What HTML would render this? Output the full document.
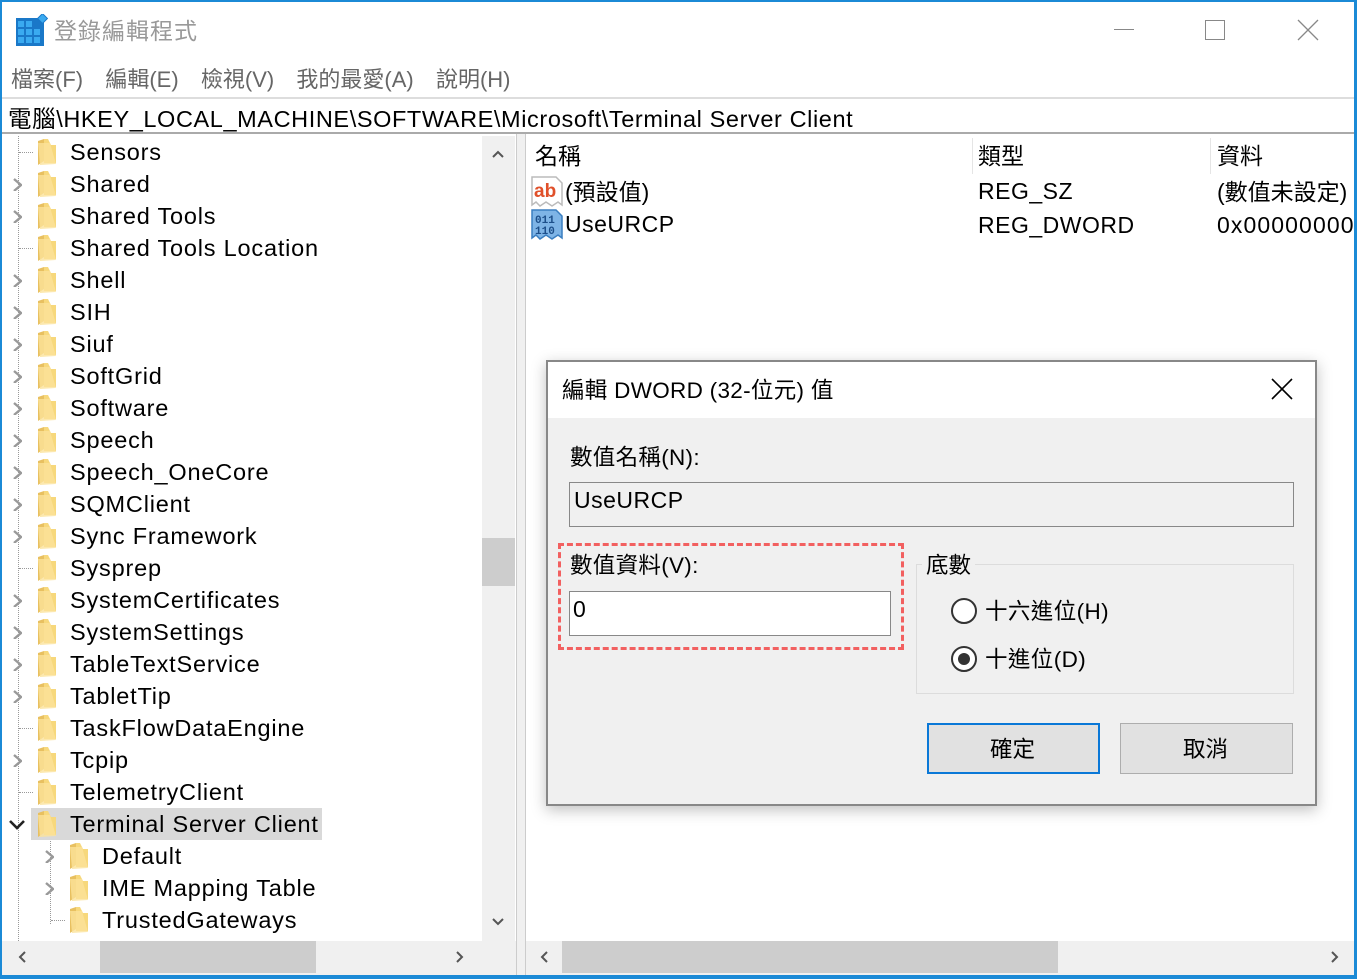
<!DOCTYPE html>
<html><head><meta charset="utf-8"><style>
*{margin:0;padding:0;box-sizing:border-box}
body{width:1357px;height:979px;position:relative;overflow:hidden;background:#fff;font-family:"Liberation Sans","Noto Sans CJK TC",sans-serif;color:#000}
.abs{position:absolute}
.win{left:0;top:0;width:1357px;height:979px;border:2px solid #1b8ad6;border-right-width:3px;border-bottom-width:4px}
.tl{font-size:23px;white-space:nowrap}
.row{position:absolute;left:0;height:32px;font-size:23.5px;line-height:32px;white-space:nowrap;letter-spacing:0.8px}
.fold{position:absolute;width:18px;height:26px;top:3px}
.chev{position:absolute;top:9px;width:10px;height:14px}
.dot{position:absolute;border-left:1px dotted #999}
</style></head><body>
<div class="abs win"></div>
<svg class="abs" style="left:15px;top:14px" width="33" height="33" viewBox="0 0 33 33">
<rect x="1" y="4" width="28" height="28" fill="#1a78c8"/>
<g fill="#3aaaf0"><rect x="3" y="7" width="6" height="6"/><rect x="11" y="7" width="6" height="6"/><rect x="3" y="15" width="6" height="6"/><rect x="11" y="15" width="6" height="6"/><rect x="19" y="15" width="6" height="6"/><rect x="3" y="23" width="6" height="6"/><rect x="11" y="23" width="6" height="6"/><rect x="19" y="23" width="6" height="6"/></g>
<rect x="24" y="1" width="7" height="7" transform="rotate(45 27.5 4.5)" fill="#3aaaf0" stroke="#1a78c8"/>
</svg>
<div class="abs tl" style="left:54px;top:12px;color:#999;font-size:23px;letter-spacing:1px">登錄編輯程式</div>
<div class="abs" style="left:1114px;top:29px;width:20px;height:1px;background:#888"></div>
<div class="abs" style="left:1205px;top:20px;width:20px;height:20px;border:1px solid #888"></div>
<svg class="abs" style="left:1297px;top:19px" width="22" height="22"><path d="M1 1L21 21M21 1L1 21" stroke="#888" stroke-width="1.3"/></svg>
<div class="abs tl" style="left:11px;top:62px;color:#666;font-size:22px;word-spacing:5px">檔案(F)&nbsp; 編輯(E)&nbsp; 檢視(V)&nbsp; 我的最愛(A)&nbsp; 說明(H)</div>
<div class="abs" style="left:2px;top:97px;width:1352px;height:37px;border-top:2px solid #ddd;border-bottom:2px solid #aaa;background:#fff"></div>
<div class="abs tl" style="left:8px;top:100px;font-size:23.5px;letter-spacing:0.6px">電腦\HKEY_LOCAL_MACHINE\SOFTWARE\Microsoft\Terminal Server Client</div>
<div class="abs" id="tree" style="left:2px;top:136px;width:514px;height:839px;overflow:hidden"></div>
<div class="abs" style="left:482px;top:136px;width:33px;height:805px;background:#f0f0f0"></div>
<div class="abs" style="left:482px;top:538px;width:33px;height:48px;background:#cdcdcd"></div>
<svg class="abs" style="left:490px;top:146px" width="16" height="16"><path d="M3 11L8 6L13 11" stroke="#555" stroke-width="2" fill="none"/></svg>
<svg class="abs" style="left:490px;top:914px" width="16" height="16"><path d="M3 5L8 10L13 5" stroke="#555" stroke-width="2" fill="none"/></svg>
<div class="abs" style="left:2px;top:941px;width:514px;height:34px;background:#f0f0f0"></div>
<div class="abs" style="left:100px;top:941px;width:216px;height:32px;background:#cdcdcd"></div>
<svg class="abs" style="left:14px;top:949px" width="16" height="16"><path d="M11 3L6 8L11 13" stroke="#555" stroke-width="2" fill="none"/></svg>
<svg class="abs" style="left:452px;top:949px" width="16" height="16"><path d="M5 3L10 8L5 13" stroke="#555" stroke-width="2" fill="none"/></svg>
<div class="abs" style="left:516px;top:134px;width:10px;height:841px;background:#f0f0f0;border-left:1px solid #ccc;border-right:1px solid #ccc"></div>
<div class="abs" style="left:972px;top:138px;width:1px;height:36px;background:#e5e5e5"></div>
<div class="abs" style="left:1210px;top:138px;width:1px;height:36px;background:#e5e5e5"></div>
<div class="abs tl" style="left:535px;top:137px">名稱</div>
<div class="abs tl" style="left:978px;top:137px">類型</div>
<div class="abs tl" style="left:1217px;top:137px">資料</div>
<svg class="abs" style="left:530px;top:175px" width="34" height="32"><path d="M2 2H26L32 8V30L28 27L22 31L16 27L10 31L6 27L2 30Z" fill="#fff" stroke="#bbb" stroke-width="1.5"/><text x="4" y="22" font-family="Liberation Sans" font-size="19" font-weight="bold" fill="#e0502a">ab</text></svg>
<div class="abs tl" style="left:565px;top:173px">(預設值)</div>
<svg class="abs" style="left:530px;top:208px" width="34" height="34"><path d="M2 2H26L32 8V30L28 27L22 31L16 27L10 31L6 27L2 30Z" fill="#7eb4e6" stroke="#3a7ec0" stroke-width="1.5"/><text x="5" y="15" font-family="Liberation Mono" font-size="11" font-weight="bold" fill="#1d4f8a">011</text><text x="5" y="26" font-family="Liberation Mono" font-size="11" font-weight="bold" fill="#1d4f8a">110</text></svg>
<div class="abs tl" style="left:565px;top:211px;letter-spacing:0.5px">UseURCP</div>
<div class="abs tl" style="left:978px;top:178px;letter-spacing:0.5px">REG_SZ</div>
<div class="abs tl" style="left:978px;top:212px;letter-spacing:0.5px">REG_DWORD</div>
<div class="abs tl" style="left:1217px;top:173px">(數值未設定)</div>
<div class="abs tl" style="left:1217px;top:212px;letter-spacing:1.1px">0x00000000</div>
<div class="abs" style="left:526px;top:941px;width:828px;height:34px;background:#f0f0f0"></div>
<div class="abs" style="left:562px;top:941px;width:496px;height:32px;background:#cdcdcd"></div>
<svg class="abs" style="left:536px;top:949px" width="16" height="16"><path d="M11 3L6 8L11 13" stroke="#555" stroke-width="2" fill="none"/></svg>
<svg class="abs" style="left:1327px;top:949px" width="16" height="16"><path d="M5 3L10 8L5 13" stroke="#555" stroke-width="2" fill="none"/></svg>
<div class="abs" style="left:546px;top:360px;width:771px;height:446px;background:#f0f0f0;border:2px solid #888;box-shadow:0 4px 14px rgba(0,0,0,.25)"></div>
<div class="abs" style="left:548px;top:362px;width:767px;height:56px;background:#fff"></div>
<div class="abs tl" style="left:562px;top:373px;font-size:22.5px;letter-spacing:0.3px">編輯 DWORD (32-位元) 值</div>
<svg class="abs" style="left:1271px;top:378px" width="22" height="22"><path d="M1 1L21 21M21 1L1 21" stroke="#000" stroke-width="1.6"/></svg>
<div class="abs tl" style="left:570px;top:440px;font-size:22.5px;letter-spacing:0.3px">數值名稱(N):</div>
<div class="abs" style="left:569px;top:482px;width:725px;height:45px;border:1px solid #888;background:#f0f0f0"></div>
<div class="abs tl" style="left:574px;top:487px;font-size:23px;letter-spacing:0.5px">UseURCP</div>
<div class="abs" style="left:558px;top:543px;width:346px;height:107px;border:3px dashed #f26060"></div>
<div class="abs tl" style="left:570px;top:548px;font-size:22.5px;letter-spacing:0.3px">數值資料(V):</div>
<div class="abs" style="left:569px;top:591px;width:322px;height:45px;border:1px solid #888;background:#fff"></div>
<div class="abs tl" style="left:573px;top:596px;font-size:23px">0</div>
<div class="abs" style="left:916px;top:564px;width:378px;height:130px;border:1px solid #dcdcdc"></div>
<div class="abs tl" style="left:922px;top:548px;font-size:22.5px;background:#f0f0f0;padding:0 4px">底數</div>
<div class="abs" style="left:951px;top:598px;width:26px;height:26px;border:2px solid #333;border-radius:50%;background:#fff"></div>
<div class="abs tl" style="left:985px;top:594px;font-size:22.5px;letter-spacing:0.4px">十六進位(H)</div>
<div class="abs" style="left:951px;top:646px;width:26px;height:26px;border:2px solid #333;border-radius:50%;background:#fff"></div>
<div class="abs" style="left:958px;top:653px;width:12px;height:12px;border-radius:50%;background:#333"></div>
<div class="abs tl" style="left:985px;top:642px;font-size:22.5px;letter-spacing:0.4px">十進位(D)</div>
<div class="abs" style="left:927px;top:723px;width:173px;height:51px;border:2px solid #0a78d7;background:#e1e1e1"></div>
<div class="abs tl" style="left:990px;top:732px;font-size:22.5px">確定</div>
<div class="abs" style="left:1120px;top:723px;width:173px;height:51px;border:1px solid #adadad;background:#e1e1e1"></div>
<div class="abs tl" style="left:1183px;top:732px;font-size:22.5px">取消</div>
<script>
var items=[["Sensors",0],["Shared",1],["Shared Tools",1],["Shared Tools Location",0],["Shell",1],["SIH",1],["Siuf",1],["SoftGrid",1],["Software",1],["Speech",1],["Speech_OneCore",1],["SQMClient",1],["Sync Framework",1],["Sysprep",0],["SystemCertificates",1],["SystemSettings",1],["TableTextService",1],["TabletTip",1],["TaskFlowDataEngine",0],["Tcpip",1],["TelemetryClient",0],["Terminal Server Client",2],["Default",1,1],["IME Mapping Table",1,1],["TrustedGateways",0,1]];
var t=document.getElementById('tree'),h='';
h+='<div class="dot" style="left:16px;top:0;height:805px"></div>';
h+='<div class="dot" style="left:48px;top:700px;height:88px"></div>';
items.forEach(function(it,i){
 var y=i*32,ind=it[2]?32:0,fx=36+ind;
 if(i==21)h+='<div class="abs" style="left:29px;top:'+(y+0)+'px;width:291px;height:32px;background:#d9d9d9"></div>';
 if(it[1]==0)h+='<div class="dot" style="left:'+(17+ind)+'px;top:'+(y+16)+'px;width:14px;height:0;border-left:0;border-top:1px dotted #999"></div>';
 if(it[1]==1)h+='<svg class="chev" style="left:'+(10+ind)+'px;top:'+(y+9)+'px" width="12" height="16"><path d="M2 2L9 8L2 14" stroke="#999" stroke-width="2.4" fill="none"/></svg>';
 if(it[1]==2)h+='<svg class="chev" style="left:6px;top:'+(y+10)+'px;width:18px" width="18" height="14"><path d="M2 3L9 10L16 3" stroke="#222" stroke-width="2.6" fill="none"/></svg>';
 h+='<svg class="fold" style="left:'+fx+'px;top:'+(y+3)+'px" width="18" height="26"><path d="M0 2L6 0V22L0 26Z" fill="#e8c060"/><path d="M6 0H10L13 6H18V24H6Z" fill="#f7d87c"/><path d="M0 4L12 4L18 25L2 26Z" fill="#fbe29a" opacity=".8"/></svg>';
 h+='<div class="row" style="left:'+(68+ind)+'px;top:'+y+'px">'+it[0]+'</div>';
});
t.innerHTML=h;
</script>
</body></html>
